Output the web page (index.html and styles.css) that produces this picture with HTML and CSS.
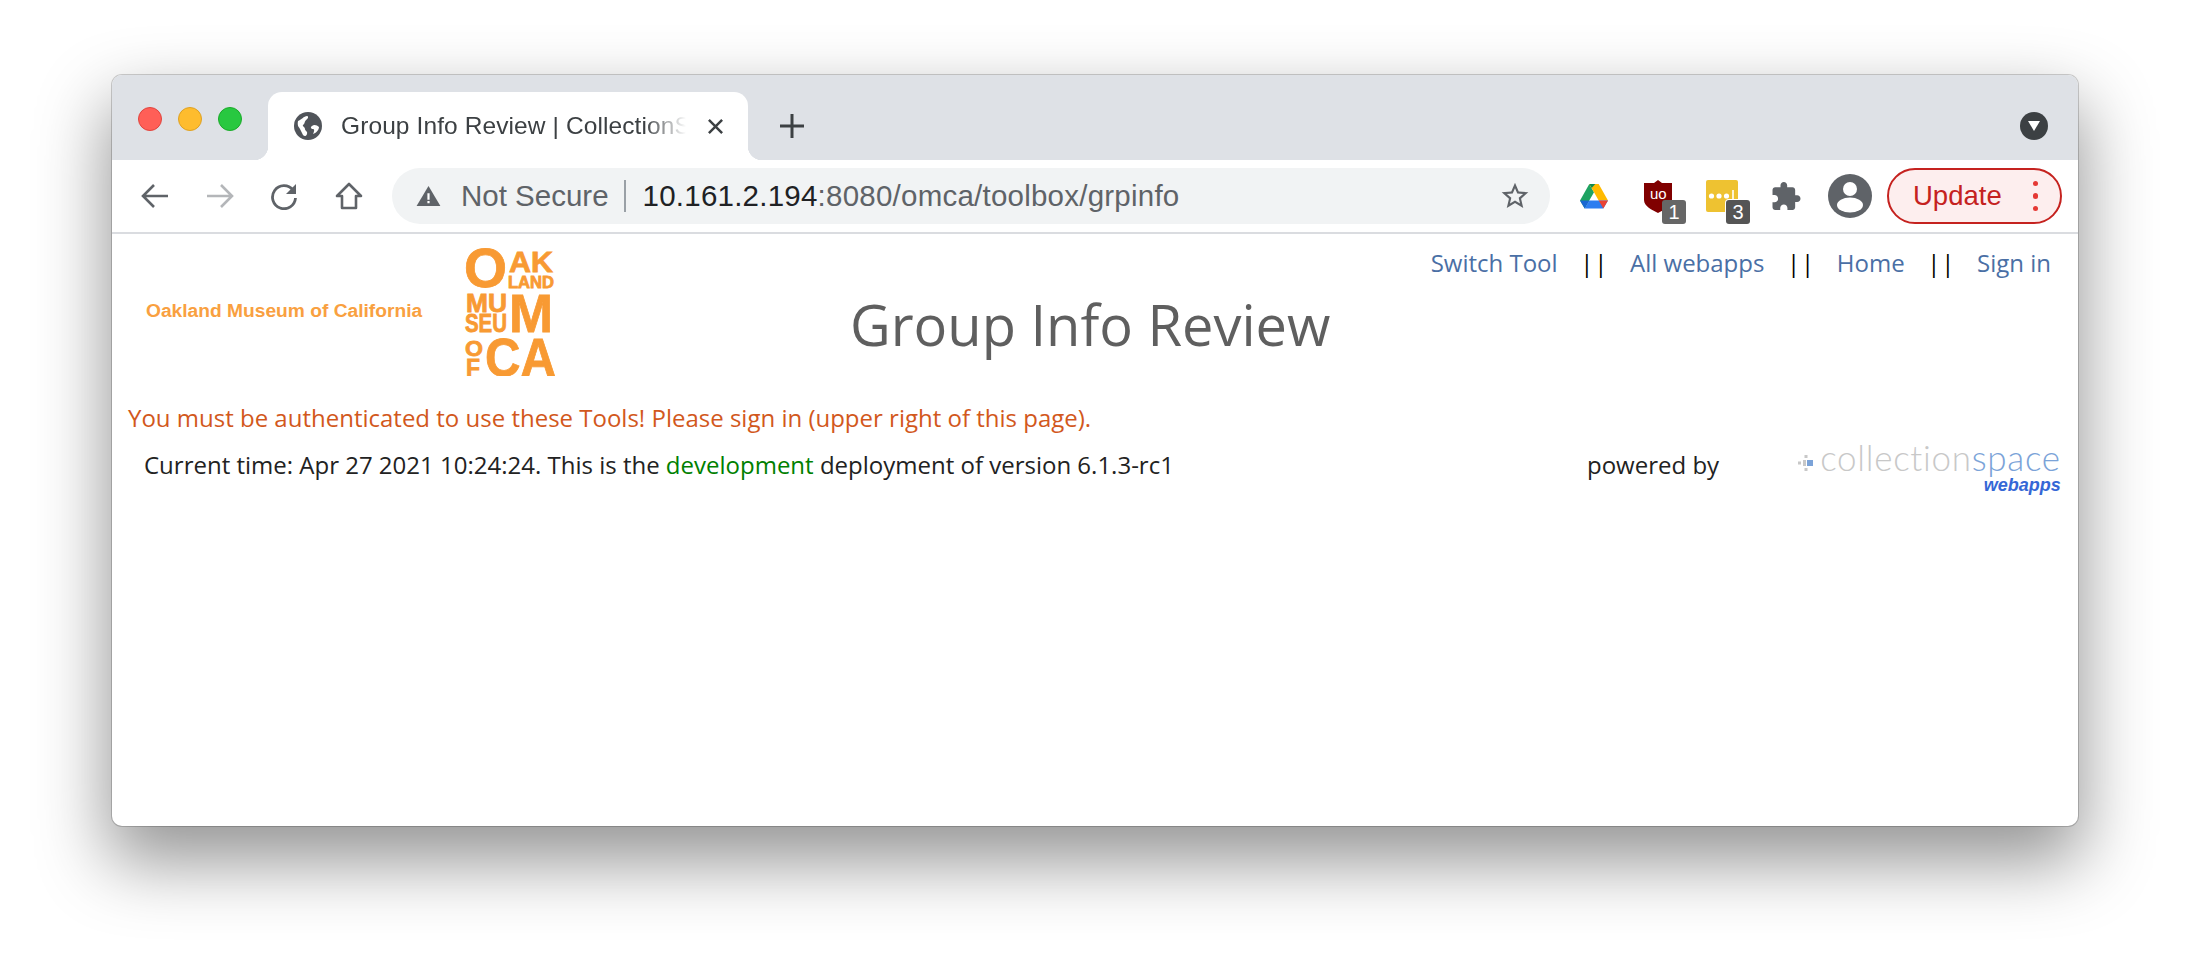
FILE: index.html
```html
<!DOCTYPE html>
<html lang="en">
<head>
    <meta charset="UTF-8">
    <title>Group Info Review | CollectionSpace</title>
    <link rel="stylesheet" href="styles.css">
</head>
<body>
    <div class="window">
        <div class="tabstrip">
            <div class="lights">
                <span class="light red"></span>
                <span class="light yellow"></span>
                <span class="light green"></span>
            </div>
            <div class="tab">
                <svg class="favicon" viewBox="0 0 28 28">
                    <circle cx="14" cy="14" r="14" fill="#50545a"/>
                    <path d="M4 9c3-1 6-5 9-5 2 0 1 3-1 4-2 2-1 4-3 5-1 1 2 2 2 4s3 2 2 5c-1 3-3 2-4 1-1-2-2-4-3-6-1-2-3-3-2-8zM25 15c-2-2-5-3-7-1-2 1-1 3 1 3s1 3 0 5c3-1 6-4 6-7z" fill="#fff"/>
                </svg>
                <span class="tab-title">Group Info Review | CollectionSpace</span>
                <svg class="tab-close" viewBox="0 0 18 18"><path d="M2 2l14 14M16 2L2 16" stroke="#3c4043" stroke-width="2.6"/></svg>
            </div>
            <svg class="new-tab" viewBox="0 0 26 26"><path d="M13 1v24M1 13h24" stroke="#3c4043" stroke-width="3"/></svg>
            <span class="tab-search"><svg viewBox="0 0 14 12"><path d="M1 1h12L7 11z" fill="#fff"/></svg></span>
        </div>

        <div class="toolbar">
            <div class="nav-btn"><svg viewBox="0 0 28 26"><path d="M27 13H3M13 2L2 13l11 11" fill="none" stroke="#5f6368" stroke-width="2.6"/></svg></div>
            <div class="nav-btn"><svg viewBox="0 0 28 26"><path d="M1 13h24M15 2l11 11-11 11" fill="none" stroke="#b4b6b9" stroke-width="2.6"/></svg></div>
            <div class="nav-btn"><svg viewBox="0 0 28 28"><path d="M23 8a11.500 11.500 0 1 0 2.500 8" fill="none" stroke="#5f6368" stroke-width="2.800"/><path d="M26 2v10H16z" fill="#5f6368"/></svg></div>
            <div class="nav-btn"><svg viewBox="0 0 28 28"><path d="M14 2L2 14h5v12h14V14h5z" fill="none" stroke="#5f6368" stroke-width="2.600" stroke-linejoin="round"/></svg></div>

            <div class="omnibox">
                <svg class="warn" viewBox="0 0 26 24"><path d="M13 1L0 23h26z" fill="#5f6368"/><path d="M11.800 9h2.400v7h-2.400zM11.800 17.500h2.400v2.500h-2.400z" fill="#fff"/></svg>
                <span class="not-secure">Not Secure</span>
                <span class="omni-sep"></span>
                <span class="url"><b>10.161.2.194</b>:8080/omca/toolbox/grpinfo</span>
                <svg class="star" viewBox="0 0 24 24"><path d="M22 9.240l-7.190-.62L12 2 9.190 8.630 2 9.240l5.460 4.730L5.820 21 12 17.270 18.180 21l-1.630-7.030L22 9.240zM12 15.400l-3.760 2.270 1-4.280-3.320-2.880 4.380-.38L12 6.100l1.710 4.040 4.380.38-3.320 2.880 1 4.280L12 15.400z" fill="#5f6368"/></svg>
            </div>

            <div class="ext">
                <svg class="drive" viewBox="0 0 28 25">
                    <path d="M9.300 0L14 8.200 4.700 24.500 0 16.500z" fill="#1ea362"/>
                    <path d="M9.300 0h9.400L28 16.500h-9.300z" fill="#ffba00"/>
                    <path d="M9.300 16.500H28l-4.700 8H4.700z" fill="#2d7df0"/>
                    <path d="M0 16.500h9.300l-4.600 8z" fill="#1967d2"/>
                    <path d="M18.700 16.500H28l-4.700 8z" fill="#ea4335"/>
                    <path d="M9.300 0h6l-3.600 4z" fill="#0f8a4f"/>
                </svg>
            </div>
            <div class="ext">
                <svg class="ublock" viewBox="0 0 28 33">
                    <path d="M14 0l4 3h10v17c0 6-8 10-14 13C8 30 0 26 0 20V3h10z" fill="#800000"/>
                    <text x="6" y="19" class="ublock-text">uo</text>
                </svg>
                <span class="badge badge-one">1</span>
            </div>
            <div class="ext">
                <svg class="lastpass" viewBox="0 0 32 32">
                    <rect width="32" height="32" rx="2" fill="#eec231"/>
                    <circle cx="5.500" cy="16" r="2.600" fill="#fff"/>
                    <circle cx="13" cy="16" r="2.600" fill="#fff"/>
                    <circle cx="20.500" cy="16" r="2.600" fill="#fff"/>
                    <path d="M27 10v12" stroke="#fff" stroke-width="1.600"/>
                </svg>
                <span class="badge badge-three">3</span>
            </div>
            <div class="ext">
                <svg class="puzzle" viewBox="2 1 21 21"><path d="M20.500 11H19V7c0-1.100-.9-2-2-2h-4V3.500C13 2.120 11.880 1 10.500 1S8 2.120 8 3.500V5H4c-1.100 0-1.990.9-1.990 2v3.800H3.500c1.490 0 2.700 1.210 2.700 2.700s-1.210 2.700-2.700 2.700H2V20c0 1.100.9 2 2 2h3.800v-1.500c0-1.490 1.210-2.700 2.700-2.700 1.490 0 2.700 1.210 2.700 2.700V22H17c1.100 0 2-.9 2-2v-4h1.500c1.380 0 2.500-1.120 2.500-2.500S21.880 11 20.500 11z" fill="#5f6368"/></svg>
            </div>
            <div class="ext">
                <svg class="avatar" viewBox="0 0 44 44">
                    <circle cx="22" cy="22" r="22" fill="#5f6368"/>
                    <circle cx="22" cy="15" r="7" fill="#fff"/>
                    <ellipse cx="22" cy="31" rx="13" ry="7.500" fill="#fff"/>
                </svg>
            </div>
            <div class="update">
                <span class="update-label">Update</span>
                <span class="update-dots"><i></i><i></i><i></i></span>
            </div>
        </div>

        <div class="page">
            <header class="page-head">
                <div class="brand">
                    <span class="brand-name">Oakland Museum of California</span>
                    <svg class="brand-logo" viewBox="0 0 92 130">
                        <text x="0" y="40.500" font-size="56" textLength="43" lengthAdjust="spacingAndGlyphs">O</text>
                        <text x="45" y="25.700" font-size="30" textLength="44" lengthAdjust="spacingAndGlyphs">AK</text>
                        <text x="44" y="42.300" font-size="16" textLength="46" lengthAdjust="spacingAndGlyphs">LAND</text>
                        <text x="2" y="65.700" font-size="25" textLength="41" lengthAdjust="spacingAndGlyphs">MU</text>
                        <text x="45" y="85.700" font-size="54" textLength="44" lengthAdjust="spacingAndGlyphs">M</text>
                        <text x="1" y="85.700" font-size="25" textLength="42" lengthAdjust="spacingAndGlyphs">SEU</text>
                        <text x="1" y="110" font-size="22" textLength="18" lengthAdjust="spacingAndGlyphs">O</text>
                        <text x="2" y="129.600" font-size="24" textLength="14" lengthAdjust="spacingAndGlyphs">F</text>
                        <text x="21" y="129.600" font-size="54" textLength="71" lengthAdjust="spacingAndGlyphs">CA</text>
                    </svg>
                </div>
                <h1 class="page-title">Group Info Review</h1>
                <nav class="tool-nav">
                    <a href="#">Switch Tool</a>
                    <span class="bars">||</span>
                    <a href="#">All webapps</a>
                    <span class="bars">||</span>
                    <a href="#">Home</a>
                    <span class="bars">||</span>
                    <a href="#">Sign in</a>
                </nav>
            </header>
            <p class="auth-msg">You must be authenticated to use these Tools! Please sign in (upper right of this page).</p>
            <div class="status-row">
                <p class="status">Current time: Apr 27 2021 10:24:24. This is the <span class="deploy">development</span> deployment of version 6.1.3-rc1</p>
                <span class="powered">powered by</span>
                <div class="cspace">
                    <div class="cspace-name"><span class="cspace-dots">
                        <svg viewBox="0 0 16 16"><rect x="0" y="6.500" width="3" height="3" fill="#c8c8c8"/><rect x="6.500" y="0" width="3" height="3" fill="#c8c8c8"/><rect x="6.500" y="13" width="3" height="3" fill="#c8c8c8"/><rect x="5" y="5" width="3" height="6" fill="#c8c8c8"/><rect x="9" y="5" width="6" height="6" fill="#7ba3d8"/></svg>
                    </span>collection<span class="cspace-blue">space</span></div>
                    <div class="cspace-sub">webapps</div>
                </div>
            </div>
        </div>
    </div>
</body>
</html>
```

FILE: styles.css
```css
html, body {
    margin: 0;
    height: 974px;
    overflow: hidden;
    background-color: #fff;
}
body {
    padding: 75px 0 0 112px;
    box-sizing: border-box;
    font-family: "Open Sans", sans-serif;
}
.window {
    width: 1966px;
    height: 751px;
    background-color: #fff;
    border-radius: 10px;
    overflow: hidden;
    box-shadow: 0 0 0 1px rgba(0, 0, 0, 0.18), 0 32px 70px 4px rgba(0, 0, 0, 0.42);
}
.tabstrip {
    height: 85px;
    background-color: #dee1e6;
    display: flex;
    align-items: flex-end;
}
.lights {
    width: 156px;
    height: 85px;
    padding: 32px 0 0 26px;
    box-sizing: border-box;
    display: flex;
    gap: 16px;
}
.light {
    width: 24px;
    height: 24px;
    border-radius: 50%;
    box-sizing: border-box;
}
.red { background-color: #ff5f57; border: 1px solid #e0443e; }
.yellow { background-color: #febc2e; border: 1px solid #dea123; }
.green { background-color: #28c840; border: 1px solid #1aab29; }
.tab {
    position: relative;
    width: 480px;
    height: 68px;
    background-color: #fff;
    border-radius: 14px 14px 0 0;
    display: flex;
    align-items: center;
    padding-left: 26px;
    box-sizing: border-box;
}
.tab::before, .tab::after {
    content: "";
    position: absolute;
    bottom: 0;
    width: 14px;
    height: 14px;
}
.tab::before {
    left: -14px;
    background: radial-gradient(circle at 0 0, transparent 14px, #fff 14.500px);
}
.tab::after {
    right: -14px;
    background: radial-gradient(circle at 100% 0, transparent 14px, #fff 14.500px);
}
.favicon {
    width: 28px;
    height: 28px;
    flex: none;
}
.tab-title {
    width: 345px;
    margin-left: 19px;
    font-family: "Liberation Sans", sans-serif;
    font-size: 24.500px;
    letter-spacing: 0.1px;
    color: #3c4043;
    white-space: nowrap;
    overflow: hidden;
    -webkit-mask-image: linear-gradient(to right, #000 88%, transparent 100%);
    mask-image: linear-gradient(to right, #000 88%, transparent 100%);
}
.tab-close {
    width: 17px;
    height: 17px;
    margin-left: 21px;
    flex: none;
}
.new-tab {
    width: 26px;
    height: 26px;
    margin: 0 0 21px 31px;
    flex: none;
}
.tab-search {
    width: 28px;
    height: 28px;
    margin: 0 30px 20px auto;
    border-radius: 50%;
    background-color: #3c4043;
    display: flex;
    align-items: center;
    justify-content: center;
}
.tab-search svg {
    width: 14px;
    height: 12px;
}
.toolbar {
    height: 72px;
    background-color: #fff;
    border-bottom: 2px solid #dadce0;
    display: flex;
    align-items: center;
    padding-left: 11px;
}
.nav-btn {
    width: 64.500px;
    display: flex;
    justify-content: center;
}
.nav-btn svg {
    width: 28px;
    height: 28px;
}
.omnibox {
    width: 1158px;
    height: 56px;
    margin: 0 12px 0 11px;
    border-radius: 28px;
    background-color: #f1f3f4;
    display: flex;
    align-items: center;
    padding: 0 24px;
    box-sizing: border-box;
    font-family: "Liberation Sans", sans-serif;
    font-size: 29.500px;
    color: #5f6368;
    flex: none;
}
.warn {
    width: 25px;
    height: 22px;
    flex: none;
}
.not-secure {
    margin-left: 20px;
}
.omni-sep {
    width: 2px;
    height: 32px;
    margin: 0 17px 0 15px;
    background-color: #9aa0a6;
}
.url {
    letter-spacing: 0.23px;
}
.url b {
    font-weight: normal;
    color: #202124;
}
.star {
    width: 32px;
    height: 32px;
    margin-left: auto;
    margin-right: -5px;
}
.ext {
    position: relative;
    width: 64px;
    height: 44px;
    display: flex;
    align-items: center;
    justify-content: center;
    flex: none;
}
.drive { width: 28px; height: 25px; }
.ublock { width: 28px; height: 33px; }
.ublock-text {
    font-family: "Liberation Sans", sans-serif;
    font-size: 15px;
    fill: #fff;
}
.lastpass { width: 32px; height: 32px; }
.puzzle { width: 29px; height: 28px; }
.avatar { width: 44px; height: 44px; }
.badge {
    position: absolute;
    top: 26px;
    left: 36px;
    width: 24px;
    height: 24px;
    border-radius: 3px;
    color: #fff;
    font-family: "Liberation Sans", sans-serif;
    font-size: 20px;
    line-height: 24px;
    text-align: center;
}
.badge-one { background-color: #666; }
.badge-three { background-color: #555; box-shadow: 0 0 0 1px #fff; }
.update {
    width: 175px;
    height: 56px;
    margin-left: 5px;
    border: 2px solid #c5221f;
    border-radius: 28px;
    background-color: #fdeeee;
    box-sizing: border-box;
    display: flex;
    align-items: center;
    padding-left: 24px;
    font-family: "Liberation Sans", sans-serif;
    font-size: 27.500px;
    color: #c5221f;
    flex: none;
}
.update-dots {
    margin-left: 31px;
    display: flex;
    flex-direction: column;
    gap: 7px;
}
.update-dots i {
    width: 5.500px;
    height: 5.500px;
    border-radius: 50%;
    background-color: #e53935;
}
.page-head {
    height: 167px;
    display: flex;
    align-items: flex-start;
}
.brand {
    width: 738px;
    flex: none;
    display: flex;
    align-items: center;
    padding: 12px 0 0 34px;
    box-sizing: border-box;
}
.brand-name {
    width: 318px;
    font-family: "Liberation Sans", sans-serif;
    font-size: 19.200px;
    font-weight: bold;
    color: #f9a040;
    white-space: nowrap;
}
.brand-logo {
    width: 92px;
    height: 130px;
}
.brand-logo text {
    font-family: "Liberation Sans", sans-serif;
    font-weight: bold;
    fill: #f89a33;
    stroke: #f89a33;
    stroke-width: 0.8px;
}
.page-title {
    margin: 51.500px 0 0;
    font-size: 56px;
    font-weight: normal;
    line-height: 76px;
    color: #5f5f5f;
    white-space: nowrap;
}
.tool-nav {
    margin-left: auto;
    padding: 12px 27px 0 0;
    display: flex;
    gap: 22.500px;
    font-size: 24px;
    line-height: 33px;
    color: #000;
}
.tool-nav a {
    color: #4a6fa5;
    text-decoration: none;
}
.bars {
    letter-spacing: 1px;
    margin-right: -1px;
}
.auth-msg {
    margin: 0;
    padding-left: 16px;
    font-size: 24px;
    line-height: 33px;
    color: #d2581c;
}
.status-row {
    display: flex;
    align-items: flex-start;
    padding: 13.500px 9px 0 32px;
    font-size: 24px;
    line-height: 33px;
    color: #222;
}
.status {
    width: 1443px;
    margin: 0;
    white-space: nowrap;
}
.deploy {
    color: #008000;
}
.powered {
    width: 211px;
    white-space: nowrap;
}
.cspace {
    margin-top: -13px;
    text-align: right;
}
.cspace-name {
    font-family: Lato, sans-serif;
    font-size: 35px;
    font-weight: 300;
    line-height: 44px;
    letter-spacing: 0.7px;
    color: #c8c8c8;
    white-space: nowrap;
}
.cspace-dots svg {
    width: 16px;
    height: 16px;
    margin-right: -4px;
}
.cspace-blue {
    color: #7ba3d8;
}
.cspace-sub {
    margin-top: -4px;
    font-family: "Liberation Sans", sans-serif;
    font-size: 18px;
    font-weight: bold;
    font-style: italic;
    line-height: 20px;
    color: #3567d6;
}
```
